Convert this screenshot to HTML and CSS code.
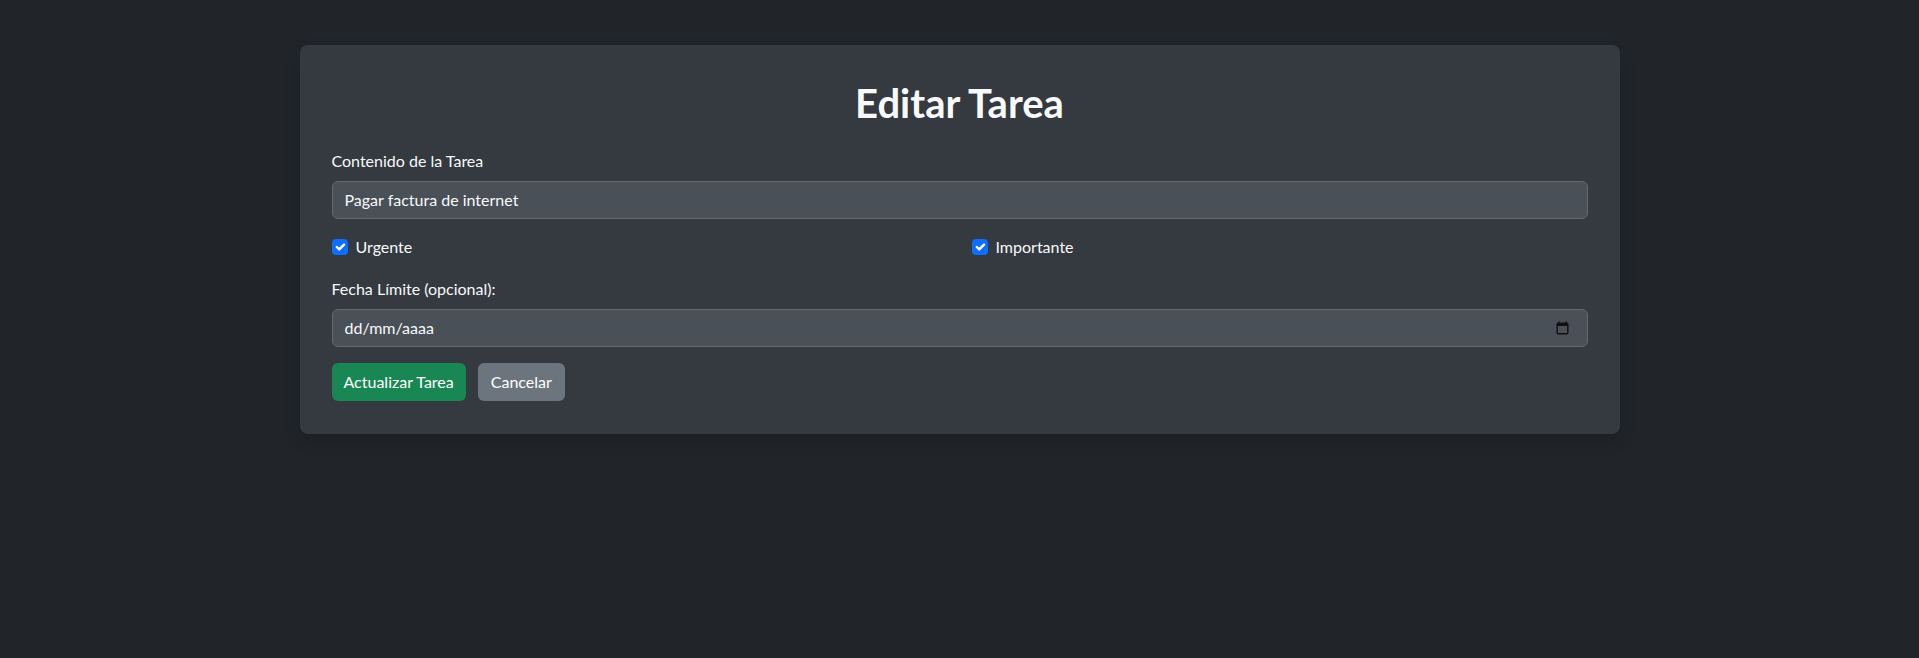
FILE: index.html
```html
<!DOCTYPE html>
<html lang="es">
<head>
<meta charset="utf-8">
<title>Editar Tarea</title>
<link rel="stylesheet" href="styles.css">
</head>
<body>
<div class="container">
  <div class="card">
    <h1 class="title">Editar Tarea</h1>
    <form class="form">
      <div class="field">
        <label class="label">Contenido de la Tarea</label>
        <div class="input">Pagar factura de internet</div>
      </div>
      <div class="checks">
        <div class="check">
          <span class="box"><svg viewBox="0 0 20 20" width="16" height="16"><path d="M6 10l3 3l6-6" fill="none" stroke="#fff" stroke-width="3" stroke-linecap="round" stroke-linejoin="round"/></svg></span>
          <span class="check-label">Urgente</span>
        </div>
        <div class="check">
          <span class="box"><svg viewBox="0 0 20 20" width="16" height="16"><path d="M6 10l3 3l6-6" fill="none" stroke="#fff" stroke-width="3" stroke-linecap="round" stroke-linejoin="round"/></svg></span>
          <span class="check-label">Importante</span>
        </div>
      </div>
      <div class="field">
        <label class="label">Fecha Límite (opcional):</label>
        <div class="input date">
          <span>dd/mm/aaaa</span>
          <svg class="cal" viewBox="0 0 13 14" width="13" height="14"><path d="M3 0.5v2M10 0.5v2" stroke="#111" stroke-width="1.4"/><rect x="1.2" y="2.2" width="10.6" height="10.6" rx="1" fill="none" stroke="#111" stroke-width="1.4"/><rect x="1" y="2" width="11" height="3" fill="#111"/></svg>
        </div>
      </div>
      <div class="actions">
        <button type="button" class="btn btn-success">Actualizar Tarea</button>
        <button type="button" class="btn btn-secondary">Cancelar</button>
      </div>
    </form>
  </div>
</div>
</body>
</html>
```

FILE: styles.css
```css
* { box-sizing: border-box; }
html, body { margin: 0; padding: 0; }
body {
  background: #212529;
  color: #dee2e6;
  font-family: "Lato", "Noto Sans", sans-serif;
  font-size: 16px;
  line-height: 1.5;
  min-height: 658px;
}
.container {
  width: 1320px;
  margin: 45px auto 0;
}
.card {
  background: #343a40;
  border-radius: 8px;
  padding: 32px 32px 33px;
  box-shadow: 0 8px 16px rgba(0, 0, 0, 0.15);
}
.title {
  margin: 0 0 22px;
  padding-top: 2px;
  text-align: center;
  font-size: 40px;
  font-weight: 700;
  line-height: 1.2;
  color: #f8f9fa;
}
.field { margin-bottom: 16px; }
.label {
  display: block;
  margin-bottom: 8px;
  color: #f8f9fa;
}
.input {
  height: 38px;
  padding: 6px 12px;
  background: #495057;
  border: 1px solid #626a72;
  border-radius: 6px;
  color: #f8f9fa;
}
.date {
  display: flex;
  align-items: center;
  justify-content: space-between;
}
.cal { margin-right: 6px; }
.checks {
  display: grid;
  grid-template-columns: 1fr 1fr;
  column-gap: 24px;
  margin-bottom: 18px;
}
.check {
  display: flex;
  align-items: center;
  min-height: 24px;
}
.box {
  width: 16px;
  height: 16px;
  border-radius: 4px;
  background: #0d6efd;
  display: flex;
  margin-right: 8px;
}
.check-label { color: #f8f9fa; }
.actions {
  display: flex;
  gap: 12px;
}
.btn {
  font-family: inherit;
  font-size: 16px;
  line-height: 24px;
  padding: 6px 12px;
  border: 1px solid transparent;
  border-radius: 6px;
  color: #fff;
  cursor: pointer;
}
.btn-success { background: #198754; padding: 6px 11px; }
.btn-secondary { background: #6c757d; }
```
